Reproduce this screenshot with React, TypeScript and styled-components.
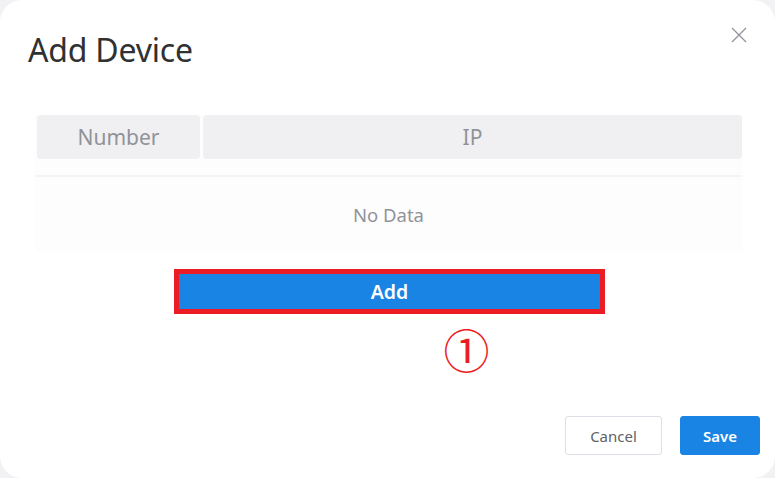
import React from "react";
import styled, { createGlobalStyle } from "styled-components";

const Global = createGlobalStyle`
  html, body { margin: 0; padding: 0; background: #f2f2f4; }
  body { font-family: "Noto Sans", "Open Sans", sans-serif; }
  * { box-sizing: border-box; }
`;

const Dialog = styled.div`
  width: 775px;
  height: 478px;
  background: #ffffff;
  border-radius: 22px;
  position: relative;
  display: flex;
  flex-direction: column;
  padding: 27px 15px 0 28px;
`;

const Header = styled.div`
  display: flex;
  justify-content: space-between;
  align-items: flex-start;
`;

const Title = styled.h1`
  margin: 0;
  font-weight: 400;
  font-size: 32px;
  line-height: 46px;
  color: #303133;
  letter-spacing: -0.2px;
`;

const CloseBtn = styled.button`
  border: none;
  background: none;
  padding: 0;
  margin: -1px 12px 0 0;
  width: 18px;
  height: 18px;
  display: flex;
  align-items: center;
  justify-content: center;
`;

const Body = styled.div`
  margin-top: 42px;
  margin-left: 7px;
  margin-right: 18px;
  display: flex;
  flex-direction: column;
`;

const Table = styled.div`
  display: flex;
  flex-direction: column;
  background: #fdfdfd;
`;

const HeadRow = styled.div`
  display: flex;
  gap: 3px;
  padding-left: 2px;
`;

const HeadCell = styled.div<{ $w?: number }>`
  ${(p) => (p.$w ? `width: ${p.$w}px;` : "flex: 1;")}
  height: 44px;
  background: #f0f0f2;
  border-radius: 4px;
  display: flex;
  align-items: center;
  justify-content: center;
  color: #909399;
  font-size: 21px;
`;

const Divider = styled.div`
  height: 2px;
  background: #f4f4f7;
  margin-top: 16px;
`;

const Empty = styled.div`
  height: 74px;
  display: flex;
  align-items: center;
  justify-content: center;
  color: #909399;
  font-size: 18.5px;
`;

const AddWrap = styled.div`
  align-self: center;
  margin-top: 18px;
  margin-left: 2px;
  border: 5px solid #ec1c24;
  width: 431px;
  height: 45px;
`;

const AddButton = styled.button`
  width: 100%;
  height: 100%;
  border: none;
  background: #1a84e4;
  color: #fff;
  font-family: "Noto Sans", sans-serif;
  font-weight: 600;
  font-size: 19.5px;
  padding: 0;
  display: flex;
  align-items: center;
  justify-content: center;
`;

const Marker = styled.div`
  align-self: center;
  margin-left: 156px;
  margin-top: 7px;
  color: #ec1c24;
  font-family: "Noto Sans CJK JP", sans-serif;
  font-size: 46px;
  line-height: 54px;
`;

const Footer = styled.div`
  margin-top: auto;
  margin-bottom: 23px;
  display: flex;
  justify-content: flex-end;
  gap: 18px;
`;

const Btn = styled.button<{ $primary?: boolean }>`
  height: 39px;
  border-radius: 3px;
  font-family: "Noto Sans", sans-serif;
  font-size: 15px;
  padding: 0;
  width: ${(p) => (p.$primary ? "80px" : "97px")};
  border: 1px solid ${(p) => (p.$primary ? "#1a84e4" : "#dcdfe6")};
  background: ${(p) => (p.$primary ? "#1a84e4" : "#fff")};
  color: ${(p) => (p.$primary ? "#fff" : "#606266")};
  font-weight: ${(p) => (p.$primary ? 600 : 400)};
`;

export default function App() {
  return (
    <>
      <Global />
      <Dialog>
        <Header>
          <Title>Add Device</Title>
          <CloseBtn aria-label="close">
            <svg width="16" height="16" viewBox="0 0 16 16">
              <path d="M1 1L15 15M15 1L1 15" stroke="#909399" strokeWidth="1.3" fill="none" />
            </svg>
          </CloseBtn>
        </Header>
        <Body>
          <Table>
            <HeadRow>
              <HeadCell $w={163}>Number</HeadCell>
              <HeadCell>IP</HeadCell>
            </HeadRow>
            <Divider />
            <Empty>No Data</Empty>
          </Table>
          <AddWrap>
            <AddButton>Add</AddButton>
          </AddWrap>
          <Marker>①</Marker>
        </Body>
        <Footer>
          <Btn>Cancel</Btn>
          <Btn $primary>Save</Btn>
        </Footer>
      </Dialog>
    </>
  );
}
